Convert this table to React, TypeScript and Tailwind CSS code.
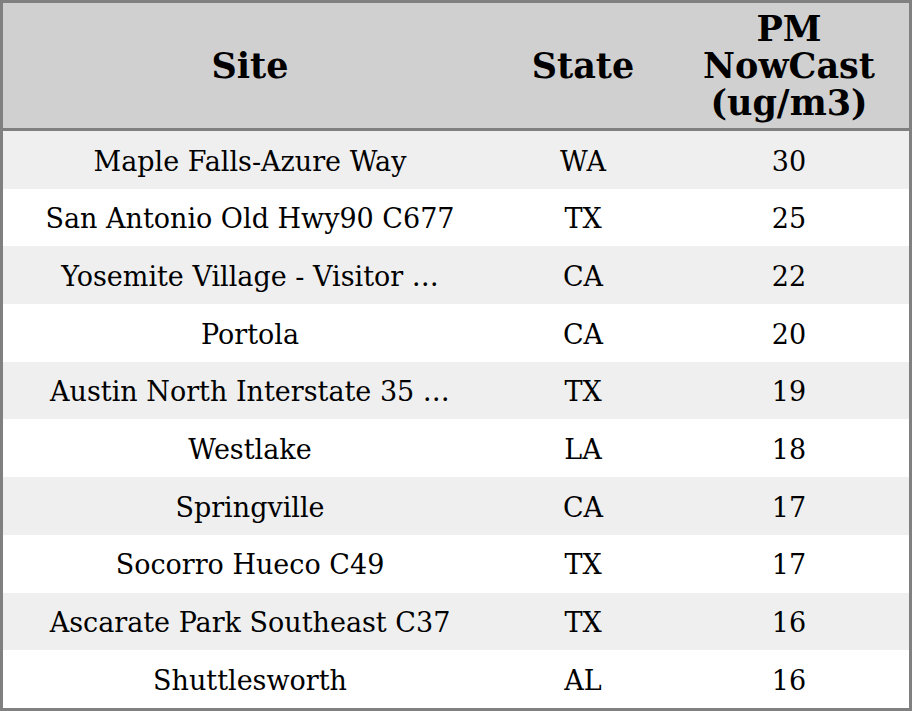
const rows = [
  { site: 'Maple Falls-Azure Way', state: 'WA', pm: 30 },
  { site: 'San Antonio Old Hwy90 C677', state: 'TX', pm: 25 },
  { site: 'Yosemite Village - Visitor …', state: 'CA', pm: 22 },
  { site: 'Portola', state: 'CA', pm: 20 },
  { site: 'Austin North Interstate 35 …', state: 'TX', pm: 19 },
  { site: 'Westlake', state: 'LA', pm: 18 },
  { site: 'Springville', state: 'CA', pm: 17 },
  { site: 'Socorro Hueco C49', state: 'TX', pm: 17 },
  { site: 'Ascarate Park Southeast C37', state: 'TX', pm: 16 },
  { site: 'Shuttlesworth', state: 'AL', pm: 16 },
]

export default function App() {
  return (
    <div className="w-[912px] h-[711px] bg-white border-[3px] border-[#808080] font-['DejaVu_Serif',serif] text-black overflow-hidden">
      <div className="grid grid-cols-[494px_172px_1fr] h-[128px] bg-[#d0d0d0] border-b-[3px] border-[#808080] text-[35px] font-bold leading-[37px] text-center">
        <div className="flex items-center justify-center">Site</div>
        <div className="flex items-center justify-center">State</div>
        <div className="flex items-center justify-center">
          PM
          <br />
          NowCast
          <br />
          (ug/m3)
        </div>
      </div>
      {rows.map((row, i) => (
        <div
          key={i}
          className={`grid grid-cols-[494px_172px_1fr] h-[57.7px] pt-[4px] items-center text-center text-[27px] ${
            i % 2 === 0 ? 'bg-[#efefef]' : 'bg-white'
          }`}
        >
          <div className="whitespace-nowrap">{row.site}</div>
          <div>{row.state}</div>
          <div>{row.pm}</div>
        </div>
      ))}
    </div>
  )
}
